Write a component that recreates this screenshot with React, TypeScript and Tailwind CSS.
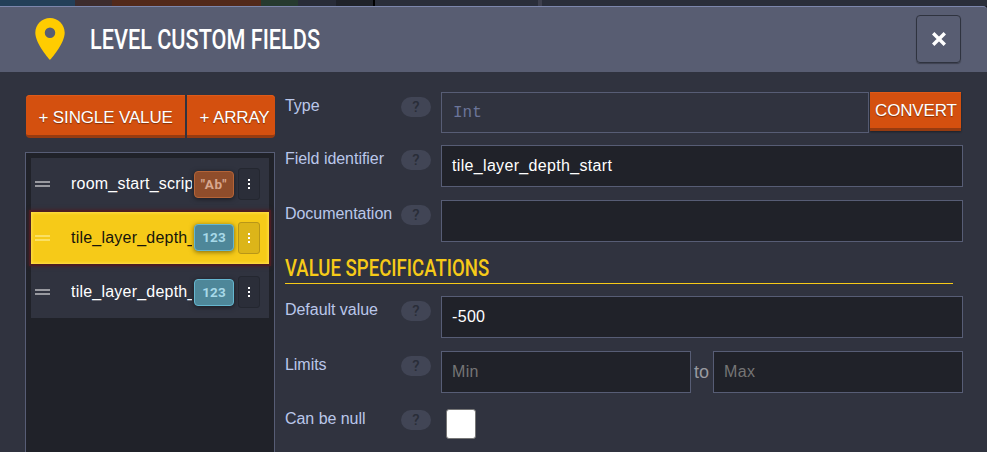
import type { ReactNode } from "react";

const strip: { w: string; c: string }[] = [
  { w: "w-[75px]", c: "bg-[#233f58]" },
  { w: "w-[37px]", c: "bg-[#3d2c2d]" },
  { w: "w-[149px]", c: "bg-[#52291a]" },
  { w: "w-[37px]", c: "bg-[#263a2f]" },
  { w: "w-[38px]", c: "bg-[#282c38]" },
  { w: "w-[37px]", c: "bg-[#1f2229]" },
  { w: "w-[2px]", c: "bg-black" },
  { w: "w-[163px]", c: "bg-[#2a2e3a]" },
  { w: "w-[4px]", c: "bg-[#3e404e]" },
  { w: "flex-1", c: "bg-[#2a2e3a]" },
];

function Field({ label, children, className = "" }: { label: string; children: ReactNode; className?: string }) {
  return (
    <div className={`flex h-[42px] items-start ${className}`}>
      <div className="w-[116px] pt-[5px] text-[16px] leading-[18px] tracking-[-0.04px] text-[#bac7ea]">{label}</div>
      <div className="mt-[5px] mr-[10px] flex h-5 w-[30px] items-center justify-center rounded-full bg-[#414555] font-['Roboto',sans-serif] text-[15px] font-medium leading-5 text-[#292d38]">
        ?
      </div>
      {children}
    </div>
  );
}

function Input({ value, placeholder, className = "flex-1" }: { value?: string; placeholder?: string; className?: string }) {
  return (
    <div className={`h-[42px] border border-[#575d75] bg-[#202229] pl-[10px] text-[16px] leading-[39px] tracking-[0.33px] ${value ? "text-white" : "text-[#757575]"} ${className}`}>
      {value || placeholder}
    </div>
  );
}

function Row({ name, tag, text = false, active = false }: { name: string; tag: string; text?: boolean; active?: boolean }) {
  return (
    <div
      className={`flex h-[52px] items-center pl-1 ${
        active
          ? "relative bg-[#f6ca18] text-[#17150c] shadow-[0_0_0_2px_#4b1d24,0_0_4px_2px_#4b1d24,inset_0_0_3px_1px_#ffdf4c]"
          : "bg-[#30333f] text-white"
      }`}
    >
      <div className="flex w-[15px] flex-col gap-[2px] opacity-50">
        <div className={`h-[2px] ${active ? "bg-[#fff6b0]" : "bg-white"}`} />
        <div className={`h-[2px] ${active ? "bg-[#fff6b0]" : "bg-white"}`} />
      </div>
      <div className="ml-[21px] h-[22px] w-[121px] overflow-hidden whitespace-nowrap text-[16px] leading-[21px] tracking-[0.22px]">{name}</div>
      <div
        className={`ml-[2px] flex h-[27px] w-10 items-center justify-center rounded-[4px] border font-['Roboto',sans-serif] text-[13.5px] font-bold leading-none shadow-[0_1px_5px_rgba(0,0,0,0.5)] ${active ? "-mt-px" : "mt-px"} ${
          text
            ? "border-[#b46438] bg-[#8f4d2b] tracking-[0.5px] text-[#d8a78e]"
            : "border-[#65b6cf] bg-[#4e8799] tracking-[0.1px] text-[#a7d9e8]"
        }`}
      >
        {tag}
      </div>
      <div
        className={`ml-1 flex h-8 w-[22px] flex-col items-center justify-center gap-[2px] rounded-[3px] border ${
          active ? "border-[#b89618] bg-[#dcb519]" : "border-[#242730] bg-[#2b2e39]"
        }`}
      >
        <i className="h-[2px] w-[2px] bg-white" />
        <i className="h-[2px] w-[2px] bg-white" />
        <i className="h-[2px] w-[2px] bg-white" />
      </div>
    </div>
  );
}

export default function App() {
  return (
    <div className="flex h-[452px] w-[987px] flex-col overflow-hidden bg-[#30333f] font-['Liberation_Sans',Arial,sans-serif]">
      <div className="flex h-[6px] shrink-0">
        {strip.map((s, i) => (
          <div key={i} className={`${s.w} ${s.c}`} />
        ))}
      </div>
      <div className="shrink-0 bg-[#15171d]">
        <header className="flex h-[66px] items-center rounded-tr-[4px] border-t border-[#7c86ac] bg-[#585d72] pr-[26px] pb-[2px] pl-[35px]">
          <svg viewBox="5 2 14 20" className="h-[42px] w-[30px]" fill="#ffcc00">
            <path d="M12 2C8.13 2 5 5.13 5 9c0 5.25 7 13 7 13s7-7.75 7-13c0-3.87-3.13-7-7-7zm0 9.5a2.5 2.5 0 0 1 0-5 2.5 2.5 0 0 1 0 5z" />
          </svg>
          <h1 className="ml-[25px] w-[300px] origin-left scale-x-[0.802] pt-[2px] font-['Roboto',sans-serif] text-[27px] font-medium leading-8 whitespace-nowrap text-white">
            LEVEL CUSTOM FIELDS
          </h1>
          <div className="ml-auto flex h-12 w-[45px] items-center justify-center rounded-[4px] border border-[#2f333f] shadow-[0_1px_1px_rgba(0,0,0,0.3)]">
            <svg viewBox="0 0 14 14" className="h-[14px] w-[14px]" stroke="white" strokeWidth="3.4">
              <path d="M1.2 1.2L12.8 12.8M12.8 1.2L1.2 12.8" />
            </svg>
          </div>
        </header>
      </div>
      <main className="flex flex-1 pl-[25px]">
        <section className="flex w-[250px] flex-col pt-[23px]">
          <div className="flex h-[43px] gap-[2px] pl-px text-[17px] leading-[46px] tracking-[-0.14px] whitespace-nowrap text-white [text-shadow:0_1px_1px_rgba(0,0,0,0.4)]">
            <div className="w-[159px] rounded-l-[4px] border-b-[3px] border-[#963b10] bg-[#d4500f] pl-[12.5px] shadow-[inset_0_1px_0_#df5a18]">+ SINGLE VALUE</div>
            <div className="w-[88px] rounded-r-[4px] border-b-[3px] border-[#963b10] bg-[#d4500f] pl-[12.5px] shadow-[inset_0_1px_0_#df5a18]">+ ARRAY</div>
          </div>
          <div className="mt-[14px] flex h-[310px] flex-col gap-[2px] border border-[#575d75] bg-[#202229] p-[5px]">
            <Row name="room_start_scrip" tag={'"Ab"'} text />
            <Row name="tile_layer_depth_" tag="123" active />
            <Row name="tile_layer_depth_" tag="123" />
          </div>
        </section>
        <section className="ml-[10px] w-[678px] pt-[20px]">
          <Field label="Type">
            <div className="h-[41px] w-[428px] border border-[#575d75] pl-[11px] font-['Liberation_Mono',monospace] text-[16px] leading-[40px] text-[#6b7599]">Int</div>
            <div className="ml-px h-[39px] w-[91px] border-b-[3px] border-[#963b10] bg-[#d4500f] pl-[5px] text-[17px] leading-[38px] tracking-[-0.14px] whitespace-nowrap text-white shadow-[inset_0_1px_0_#df5a18,0_1px_2px_rgba(0,0,0,0.4)] [text-shadow:0_1px_1px_rgba(0,0,0,0.4)]">CONVERT</div>
          </Field>
          <Field label="Field identifier" className="mt-[11px]">
            <Input value="tile_layer_depth_start" />
          </Field>
          <Field label="Documentation" className="mt-[13px]">
            <Input />
          </Field>
          <div className="mt-[10px] mr-[10px] h-[32px] border-b border-[#f6ca18]">
            <h2 className="w-[300px] origin-left scale-x-[0.808] font-['Roboto',sans-serif] text-[23px] font-medium leading-[34px] whitespace-nowrap text-[#f6ca18]">VALUE SPECIFICATIONS</h2>
          </div>
          <Field label="Default value" className="mt-[12px]">
            <Input value="-500" />
          </Field>
          <Field label="Limits" className="mt-[13px]">
            <Input placeholder="Min" className="w-[250px]" />
            <div className="w-[22px] pr-px text-center text-[18px] leading-[42px] text-[#989aa0]">to</div>
            <Input placeholder="Max" className="w-[250px]" />
          </Field>
          <Field label="Can be null" className="mt-[12px]">
            <div className="mt-[4px] ml-[5px] h-[30px] w-[30px] rounded-[3px] border border-[#767676] bg-white" />
          </Field>
        </section>
      </main>
    </div>
  );
}
